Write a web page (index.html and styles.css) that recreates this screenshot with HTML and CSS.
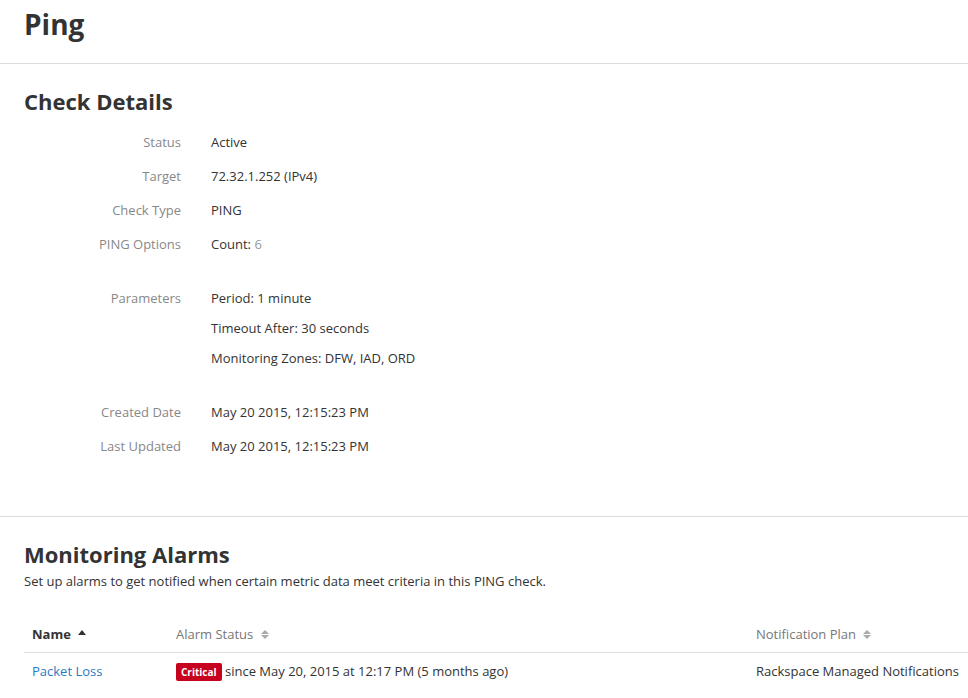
FILE: index.html
```html
<!DOCTYPE html>
<html>
<head>
<meta charset="utf-8">
<link rel="stylesheet" href="styles.css">
</head>
<body>
<header class="page-header">
  <h1 class="page-title">Ping</h1>
</header>
<section class="section details">
  <h2 class="section-title">Check Details</h2>
  <div class="detail-group">
    <div class="row"><div class="label">Status</div><div class="value">Active</div></div>
    <div class="row"><div class="label">Target</div><div class="value">72.32.1.252 (IPv4)</div></div>
    <div class="row"><div class="label">Check Type</div><div class="value">PING</div></div>
    <div class="row"><div class="label">PING Options</div><div class="value">Count: <span class="muted">6</span></div></div>
  </div>
  <div class="detail-group">
    <div class="row multi">
      <div class="label">Parameters</div>
      <div class="value">
        <div class="line">Period: 1 minute</div>
        <div class="line">Timeout After: 30 seconds</div>
        <div class="line">Monitoring Zones: DFW, IAD, ORD</div>
      </div>
    </div>
  </div>
  <div class="detail-group">
    <div class="row"><div class="label">Created Date</div><div class="value">May 20 2015, 12:15:23 PM</div></div>
    <div class="row"><div class="label">Last Updated</div><div class="value">May 20 2015, 12:15:23 PM</div></div>
  </div>
</section>
<section class="section alarms">
  <h2 class="section-title">Monitoring Alarms</h2>
  <p class="subtitle">Set up alarms to get notified when certain metric data meet criteria in this PING check.</p>
  <table class="table">
    <thead>
      <tr>
        <th class="col-name sorted">Name <span class="sort-up"></span></th>
        <th class="col-status">Alarm Status <span class="sort-both"><span class="tri-up"></span><span class="tri-down"></span></span></th>
        <th class="col-plan">Notification Plan <span class="sort-both"><span class="tri-up"></span><span class="tri-down"></span></span></th>
      </tr>
    </thead>
    <tbody>
      <tr>
        <td><a class="link" href="#">Packet Loss</a></td>
        <td><span class="badge">Critical</span> since May 20, 2015 at 12:17 PM (5 months ago)</td>
        <td>Rackspace Managed Notifications</td>
      </tr>
    </tbody>
  </table>
</section>
</body>
</html>
```
FILE: styles.css
```css
html, body {
  margin: 0;
  padding: 0;
  background: #fff;
}
body {
  font-family: "Open Sans", "Liberation Sans", sans-serif;
  color: #333;
  font-size: 13px;
  overflow: hidden;
}
.page-header {
  height: 63px;
  border-bottom: 1px solid #dcdcdc;
  padding: 0 24px;
}
.page-title {
  margin: 0;
  padding-top: 4px;
  font-size: 28px;
  font-weight: 700;
  line-height: 40px;
  color: #333;
}
.section {
  padding: 21px 24px 0;
}
.details {
  height: 431px;
  border-bottom: 1px solid #dcdcdc;
}
.section-title {
  margin: 0;
  font-size: 22px;
  font-weight: 700;
  line-height: 32px;
  color: #333;
}
.details .section-title {
  margin-bottom: 8px;
}
.detail-group {
  margin-bottom: 20px;
}
.row {
  display: grid;
  grid-template-columns: 157px 1fr;
  column-gap: 30px;
  line-height: 34px;
}
.label {
  text-align: right;
  color: #888;
}
.value {
  color: #333;
}
.muted {
  color: #999;
}
.multi {
  padding: 2px 0;
  line-height: 30px;
}
.multi .label {
  line-height: 30px;
}
.alarms .section-title {
  margin-top: 2px;
  margin-bottom: 3px;
  line-height: 28px;
}
.subtitle {
  margin: 0 0 25px;
  line-height: 20px;
}
.table {
  width: calc(100% + 24px);
  border-collapse: collapse;
  text-align: left;
}
.table th {
  font-weight: 400;
  color: #777;
  padding: 8px 8px 8px;
  line-height: 20px;
  height: 20px;
  border-bottom: 1px solid #ddd;
  white-space: nowrap;
}
.table th.sorted {
  font-weight: 700;
  color: #333;
}
.table td {
  padding: 8px 8px;
  line-height: 20px;
  white-space: nowrap;
}
.col-name { width: 128px; }
.col-status { width: 564px; }
.link {
  color: #2b7bc4;
  text-decoration: none;
}
.badge {
  display: inline-block;
  background: #c6001e;
  color: #fff;
  font-size: 10px;
  font-weight: 700;
  line-height: 18px;
  padding: 0 5px;
  border-radius: 2px;
  vertical-align: 0;
}
.sort-up {
  display: inline-block;
  width: 0;
  height: 0;
  border-left: 4px solid transparent;
  border-right: 4px solid transparent;
  border-bottom: 5px solid #333;
  vertical-align: 4px;
  margin-left: 4px;
}
.sort-both {
  display: inline-flex;
  flex-direction: column;
  gap: 1px;
  vertical-align: middle;
  margin-left: 4px;
  position: relative;
  top: -1px;
}
.tri-up, .tri-down {
  width: 0;
  height: 0;
  border-left: 4px solid transparent;
  border-right: 4px solid transparent;
}
.tri-up { border-bottom: 4px solid #aaa; }
.tri-down { border-top: 4px solid #aaa; }
```
